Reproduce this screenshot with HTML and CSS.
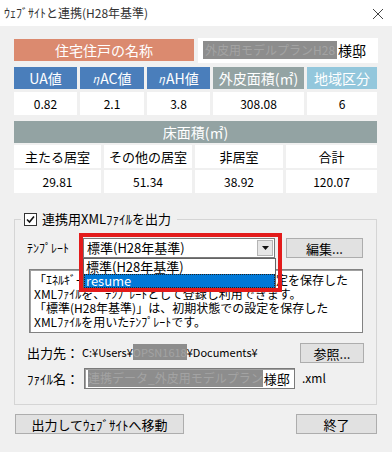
FILE: index.html
```html
<!doctype html>
<html lang="ja"><head><meta charset="utf-8"/>
<link rel="stylesheet" href="styles.css">
<title>ｳｪﾌﾞｻｲﾄと連携(H28年基準)</title>
</head>
<body>
	<div class="titlebar">
		<span class="title">ｳｪﾌﾞｻｲﾄと連携(H28年基準)</span>
		<svg class="close" width="12" height="12" viewBox="0 0 12 12"><path d="M1 1L11 11M11 1L1 11" stroke="#444" stroke-width="1" fill="none"/></svg>
	</div>

	<div class="content">

		<div class="name-row">
			<div class="cell orange big">住宅住戸の名称</div>
			<div class="namebox"><span class="mask">外皮用モデルプランH28</span>様邸</div>
		</div>

		<div class="spec">
			<div class="cell blue big">UA値</div>
			<div class="cell blue big"><i>η</i>AC値</div>
			<div class="cell blue big"><i>η</i>AH値</div>
			<div class="cell gray big">外皮面積(㎡)</div>
			<div class="cell lightblue big">地域区分</div>
			<div class="cell white">0.82</div>
			<div class="cell white">2.1</div>
			<div class="cell white">3.8</div>
			<div class="cell white">308.08</div>
			<div class="cell white">6</div>
		</div>

		<div class="floor">
			<div class="cell gray big wide">床面積(㎡)</div>
			<div class="cell white label">主たる居室</div>
			<div class="cell white label">その他の居室</div>
			<div class="cell white label">非居室</div>
			<div class="cell white label">合計</div>
			<div class="cell white">29.81</div>
			<div class="cell white">51.34</div>
			<div class="cell white">38.92</div>
			<div class="cell white">120.07</div>
		</div>

		<fieldset class="group">
			<legend><span class="check"><svg width="9" height="9" viewBox="0 0 9 9"><path d="M1 4.5L3.5 7L8 1.5" stroke="#111" stroke-width="1.6" fill="none"/></svg></span>連携用XMLﾌｧｲﾙを出力</legend>

			<div class="row template">
				<span class="lbl">ﾃﾝﾌﾟﾚｰﾄ</span>
				<div class="combo-wrap">
					<div class="combo">
						<span>標準(H28年基準)</span>
						<span class="arrow"><svg width="7" height="4" viewBox="0 0 7 4"><path d="M0 0H7L3.5 4Z" fill="#111"/></svg></span>
					</div>
					<ul class="droplist">
						<li>標準(H28年基準)</li>
						<li class="sel">resume</li>
					</ul>
					<div class="redbox"></div>
				</div>
				<button class="btn edit">編集...</button>
			</div>

			<div class="desc">
				「ｴﾈﾙｷﾞｰ消費性能計算ﾌﾟﾛｸﾞﾗﾑ(住宅版)」で設定を保存した<br>
				XMLﾌｧｲﾙを、ﾃﾝﾌﾟﾚｰﾄとして登録し利用できます。<br>
				「標準(H28年基準)」は、初期状態での設定を保存した<br>
				XMLﾌｧｲﾙを用いたﾃﾝﾌﾟﾚｰﾄです。
			</div>

			<div class="row output">
				<span class="lbl2">出力先：</span>
				<span class="path">C:¥Users¥<span class="mask">OPSN1618</span>¥Documents¥</span>
				<button class="btn ref">参照...</button>
			</div>

			<div class="row file">
				<span class="lbl2">ﾌｧｲﾙ名：</span>
				<div class="input"><span class="mask">連携データ_外皮用モデルプラン</span>様邸</div>
				<span class="ext">.xml</span>
			</div>
		</fieldset>

		<div class="footer">
			<button class="btn go">出力してｳｪﾌﾞｻｲﾄへ移動</button>
			<button class="btn quit">終了</button>
		</div>

	</div>
</body>
</html>
```

FILE: styles.css
```css
* { box-sizing: border-box; }
body { margin: 0; width: 392px; height: 452px; background-color: #f0f0f0; font-family: "Noto Sans CJK JP", "Liberation Sans", sans-serif; font-size: 13px; line-height: 1.2; color: #000; overflow: hidden; white-space: nowrap; }

.titlebar { height: 26px; background-color: #fff; display: flex; align-items: center; justify-content: space-between; padding: 0 8px 0 4px; }
.title { font-size: 12px; color: #333; }
.close { margin-top: 1px; }

.content { padding: 0 14px; }

.cell { display: flex; align-items: center; justify-content: center; height: 23px; font-size: 12px; line-height: 1; }
.big { font-size: 14px; color: #fff; height: 22px; }
.big i { font-style: italic; font-size: 11px; margin-right: 1px; }
.orange { background-color: #db8a6f; }
.blue { background-color: #4a7ebb; }
.gray { background-color: #93a3a3; }
.lightblue { background-color: #93c7dc; }
.white { background-color: #fff; }
.label { font-size: 13px; }

.name-row { display: flex; align-items: center; gap: 4px; margin-top: 11px; height: 26px; }
.name-row .orange { width: 180px; }
.namebox { width: 180px; height: 25px; background-color: #fff; display: flex; align-items: center; padding-left: 5px; font-size: 14px; }

.mask { background-color: #8d8d8d; color: #a3a3a3; }
.namebox .mask { padding: 2px 2px; font-size: 12px; margin-right: 1px; }

.spec { display: grid; grid-template-columns: 63px 64px 63px 91px 70px; column-gap: 3px; row-gap: 3px; margin-top: 4px; }

.floor { display: grid; grid-template-columns: 87px 88px 88px 91px; column-gap: 3px; row-gap: 2px; margin-top: 6px; }
.floor .wide { grid-column: 1 / 5; }

.group { margin: 18px 1px 0 0; padding: 0 12px 15px 12px; border: 1px solid #d5d5d5; }
.group legend { display: flex; align-items: center; margin-left: -6px; padding: 0 6px 0 3px; font-size: 13px; height: 16px; }
.check { width: 13px; height: 13px; border: 1px solid #333; background-color: #fff; display: flex; align-items: center; justify-content: center; margin-right: 5px; }

.row { display: flex; align-items: center; }
.template { margin-top: 11px; }
.lbl { width: 56px; font-size: 12px; }

.combo-wrap { position: relative; }
.combo { width: 192px; height: 20px; border: 1px solid #7a7a7a; background-color: #fff; display: flex; align-items: center; justify-content: space-between; padding: 0 1px 0 3px; font-size: 13px; }
.arrow { width: 16px; height: 16px; background-color: #e6e6e6; border: 1px solid #b5b5b5; display: flex; align-items: center; justify-content: center; }
.droplist { position: absolute; left: 0; top: 20px; width: 193px; margin: 0; padding: 0; list-style-type: none; background-color: #fff; border: 1px solid #646464; z-index: 2; }
.droplist li { height: 15px; padding-left: 2px; font-size: 13px; line-height: 15px; }
.droplist li.sel { background-color: #0078d7; color: #fff; outline: 1px dotted #222; outline-offset: -1px; height: 14px; line-height: 13px; }
.redbox { position: absolute; left: -4px; top: -5px; width: 203px; height: 59px; border: 4px solid #e31b1b; z-index: 3; }

.btn { height: 20px; background-color: #e1e1e1; border: 1px solid #adadad; font-family: inherit; font-size: 13px; line-height: 1; padding: 0; color: #000; }
.edit { width: 77px; margin-left: 11px; }

.desc { margin: 11px 0 0 2px; width: 334px; height: 64px; background-color: #fff; border: 1px solid #828282; box-shadow: inset 1px 1px 0 #a0a0a0; padding: 3px 3px 0 4px; font-size: 12px; line-height: 14px; }

.output { margin-top: 10px; }
.lbl2 { width: 55px; font-size: 13px; }
.path { font-size: 11px; flex: 1; }
.ref { width: 64px; }

.file { margin-top: 5px; }
.input { width: 211px; height: 21px; margin-left: 2px; background-color: #fff; border: 1px solid #7a7a7a; box-shadow: inset 1px 1px 0 #a0a0a0; display: flex; align-items: center; padding-left: 3px; font-size: 13px; }
.input .mask { font-size: 12px; padding: 1px 0; margin-right: 1px; }
.ext { margin-left: 7px; font-size: 12px; }

.footer { display: flex; justify-content: space-between; margin: 9px 1px 0 1px; }
.go { width: 169px; }
.quit { width: 81px; }
```
